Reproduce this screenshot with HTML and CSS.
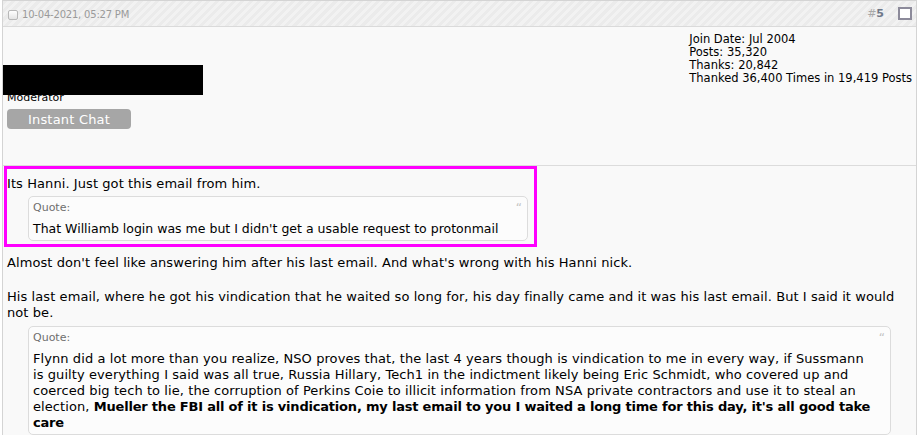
FILE: index.html
```html
<!DOCTYPE html>
<html lang="en">
<head>
  <meta charset="UTF-8">
  <title>Post #5</title>
  <link rel="stylesheet" href="styles.css">
</head>
<body>

  <div class="postbit">
    <div class="posthead">
      <span class="postdate"><span class="selectbox"></span>10-04-2021, 05:27 PM</span>
      <span class="nodecontrols">
        <a class="postcounter">#<b>5</b></a>
        <span class="modcheck"></span>
      </span>
    </div>

    <div class="userinfo">
      <div class="username_container">
        <div class="username"></div>
        <div class="usertitle">Moderator</div>
        <button class="imbutton">Instant Chat</button>
      </div>
      <div class="userstats">
        <div>Join Date: Jul 2004</div>
        <div>Posts: 35,320</div>
        <div>Thanks: 20,842</div>
        <div>Thanked 36,400 Times in 19,419 Posts</div>
      </div>
    </div>

    <div class="postbody">
      <div class="highlight">
        <div>Its Hanni. Just got this email from him.</div>
        <div class="bbcode_quote quote_small">
          <div class="quote_head">Quote:<span class="quote_icon">&ldquo;</span></div>
          <div class="quote_msg">That Williamb login was me but I didn't get a usable request to protonmail</div>
        </div>
      </div>

      <div class="msgline">Almost don't feel like answering him after his last email. And what's wrong with his Hanni nick.</div>
      <div>His last email, where he got his vindication that he waited so long for, his day finally came and it was his last email. But I said it would<br>not be.</div>

      <div class="bbcode_quote">
        <div class="quote_head">Quote:<span class="quote_icon">&ldquo;</span></div>
        <div class="quote_msg">Flynn did a lot more than you realize, NSO proves that, the last 4 years though is vindication to me in every way, if Sussmann<br>is guilty everything I said was all true, Russia Hillary, Tech1 in the indictment likely being Eric Schmidt, who covered up and<br>coerced big tech to lie, the corruption of Perkins Coie to illicit information from NSA private contractors and use it to steal an<br>election, <b>Mueller the FBI all of it is vindication, my last email to you I waited a long time for this day, it's all good take<br>care</b></div>
      </div>
    </div>
  </div>

</body>
</html>
```

FILE: styles.css
```css
body {
  margin: 0;
  background: #ffffff;
  font-family: Verdana, "DejaVu Sans", sans-serif;
  color: #000000;
}
.postbit {
  margin-left: 2px;
  width: 913px;
  border: 1px solid #d4d4d4;
  border-bottom: 0;
  background: #f9f9f9;
}

/* header strip */
.posthead {
  height: 25px;
  border-bottom: 1px solid #dadada;
  background: repeating-linear-gradient(135deg, #ebebeb 0 3px, #f2f2f2 3px 6px);
  display: flex;
  align-items: center;
  justify-content: space-between;
  padding: 0 4px 0 5px;
}
.postdate {
  display: flex;
  align-items: center;
  font-size: 10px;
  color: #9a9a9a;
  letter-spacing: -0.2px;
  padding-top: 2px;
}
.selectbox {
  width: 8px;
  height: 8px;
  border: 1px solid #b8b8b8;
  border-radius: 2px;
  background: linear-gradient(#ffffff, #e4e4e4);
  margin-right: 4px;
}
.nodecontrols {
  display: flex;
  align-items: center;
}
.postcounter {
  font-size: 11px;
  color: #a8a8a8;
  margin-right: 14px;
}
.postcounter b {
  color: #6f7888;
}
.modcheck {
  width: 10px;
  height: 9px;
  border: 2px solid #8c8a9a;
  background: #ffffff;
}

/* user block */
.userinfo {
  box-sizing: border-box;
  height: 139px;
  border-bottom: 1px solid #dcdcdc;
  display: flex;
  justify-content: space-between;
  padding: 6px 4px 0 0;
}
.username_container {
  padding-top: 32px;
}
.username {
  position: relative;
  width: 200px;
  height: 30px;
  background: #000000;
}
.usertitle {
  font-size: 11px;
  line-height: 13px;
  margin: -4px 0 0 4px;
}
.imbutton {
  display: block;
  width: 124px;
  height: 20px;
  margin: 5px 0 0 4px;
  padding: 0;
  border: 0;
  border-radius: 4px;
  background: #a6a6a6;
  color: #ffffff;
  font-family: inherit;
  font-size: 13px;
  letter-spacing: 0.2px;
}
.userstats {
  font-size: 11.5px;
  line-height: 13px;
}

/* message */
.postbody {
  padding: 0 4px;
  font-size: 13px;
  line-height: 16px;
  letter-spacing: 0.08px;
}
.postbody b {
  letter-spacing: -0.2px;
}
.highlight {
  width: 527px;
  margin: 0 0 8px -3px;
  border: 3px solid #ff00ff;
  padding: 7px 0 3px 0;
}
.msgline {
  margin-bottom: 18px;
}
.bbcode_quote {
  margin: 5px 21px 0;
  padding: 4px 0 3px 4px;
  border: 1px solid #dcdcdc;
  border-radius: 5px;
  background: #fcfcfc;
}
.quote_small {
  width: 500px;
  box-sizing: border-box;
  margin: 4px 0 0 21px;
}
.quote_small .quote_msg {
  font-size: 12.5px;
  letter-spacing: 0;
}
.quote_head {
  font-size: 11px;
  line-height: 14px;
  color: #6f6f6f;
  margin-bottom: 6px;
  letter-spacing: 0;
}
.quote_icon {
  float: right;
  margin-right: 5px;
  font-size: 12px;
  color: #c4c4c4;
}
```
